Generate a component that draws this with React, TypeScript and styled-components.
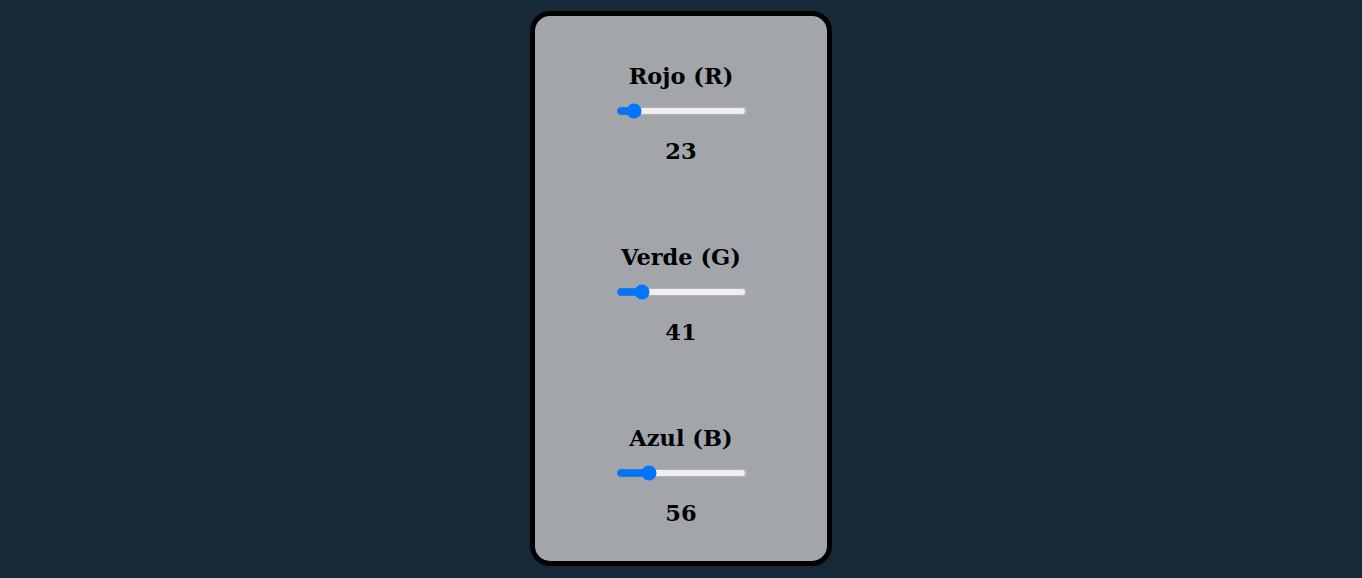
import React, { useState } from "react";
import styled, { createGlobalStyle } from "styled-components";

const GlobalStyle = createGlobalStyle`
  html, body {
    margin: 0;
    padding: 0;
    background: #172838;
  }
`;

const Page = styled.div`
  display: flex;
  justify-content: center;
  padding-top: 11px;
  min-height: 578px;
  box-sizing: border-box;
`;

const Card = styled.div`
  width: 302px;
  height: 555px;
  box-sizing: border-box;
  border: 5px solid #000;
  border-radius: 20px;
  background: #a2a6aa;
  display: flex;
  flex-direction: column;
  align-items: center;
  padding-top: 47px;
  gap: 80px;
  font-family: "DejaVu Serif", "Liberation Serif", serif;
  color: #000;
`;

const Section = styled.div`
  display: flex;
  flex-direction: column;
  align-items: center;
`;

const Label = styled.h2`
  margin: 0;
  font-size: 22.5px;
  line-height: 26px;
  font-weight: bold;
`;

const Slider = styled.input`
  width: 131px;
  height: 16px;
  margin: 14px 0 0;
  accent-color: #0075ff;
`;

const Value = styled.p`
  margin: 19px 0 0;
  font-size: 22.5px;
  line-height: 26px;
  font-weight: bold;
`;

type ChannelProps = {
  label: string;
  initial: number;
};

const Channel = ({ label, initial }: ChannelProps) => {
  const [value, setValue] = useState(initial);
  return (
    <Section>
      <Label>{label}</Label>
      <Slider
        type="range"
        min={0}
        max={255}
        value={value}
        onChange={(e) => setValue(Number(e.target.value))}
      />
      <Value>{value}</Value>
    </Section>
  );
};

const App = () => {
  return (
    <>
      <GlobalStyle />
      <Page>
        <Card>
          <Channel label="Rojo (R)" initial={23} />
          <Channel label="Verde (G)" initial={41} />
          <Channel label="Azul (B)" initial={56} />
        </Card>
      </Page>
    </>
  );
};

export default App;
